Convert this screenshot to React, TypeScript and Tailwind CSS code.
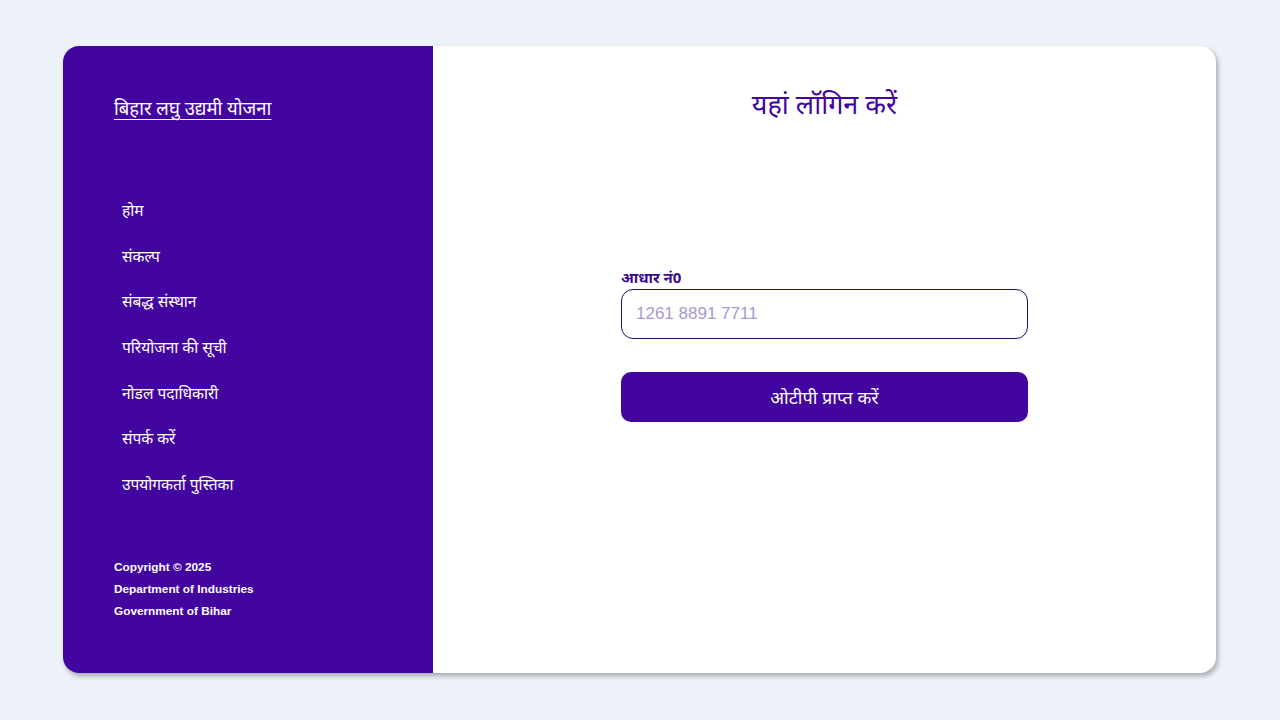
import React from "react";

const nav = [
  "होम",
  "संकल्प",
  "संबद्ध संस्थान",
  "परियोजना की सूची",
  "नोडल पदाधिकारी",
  "संपर्क करें",
  "उपयोगकर्ता पुस्तिका",
];

export default function App() {
  return (
    <div
      className="w-full h-screen bg-[#edf1f8] flex items-start"
      style={{ fontFamily: '"Noto Sans", "Liberation Sans", sans-serif' }}
    >
      <div className="ml-[63px] mt-[46px] w-[1153px] h-[627px] bg-white rounded-[16px] shadow-[2px_3px_5px_rgba(0,0,0,0.3)] flex overflow-hidden">
        <aside className="w-[370px] bg-[#4305a0] text-white pl-[51px] pt-[48px] flex flex-col">
          <a className="text-[18.5px] leading-[28px] underline underline-offset-[4px] decoration-1 self-start">
            बिहार लघु उद्यमी योजना
          </a>
          <ul className="mt-[76px] pl-[8px] flex flex-col">
            {nav.map((n) => (
              <li key={n} className="text-[15.5px] leading-[24px] h-[45.67px] flex items-start">
                {n}
              </li>
            ))}
          </ul>
          <div
            className="mt-[38px] font-bold leading-[22px]"
            style={{ fontFamily: '"Liberation Sans", Arial, sans-serif', fontSize: "11.8px" }}
          >
            <div>Copyright © 2025</div>
            <div>Department of Industries</div>
            <div>Government of Bihar</div>
          </div>
        </aside>
        <main className="flex-1 flex flex-col items-center pt-[40px]">
          <h1 className="text-[27px] leading-[36px] text-[#4305a0]">यहां लॉगिन करें</h1>
          <div className="w-[407px] mt-[145px] flex flex-col">
            <label className="text-[15px] leading-[20px] font-bold text-[#3a0a8a]">आधार नं0</label>
            <input
              className="mt-[2px] h-[50px] w-full border border-[#2a0870] rounded-[12px] px-[14px] text-[17px] outline-none placeholder:text-[#a898cc]"
              style={{ fontFamily: '"Liberation Sans", Arial, sans-serif' }}
              placeholder="1261 8891 7711"
            />
            <button className="mt-[33px] h-[50px] w-full bg-[#4305a0] rounded-[10px] text-white text-[18px]">
              ओटीपी प्राप्त करें
            </button>
          </div>
        </main>
      </div>
    </div>
  );
}
